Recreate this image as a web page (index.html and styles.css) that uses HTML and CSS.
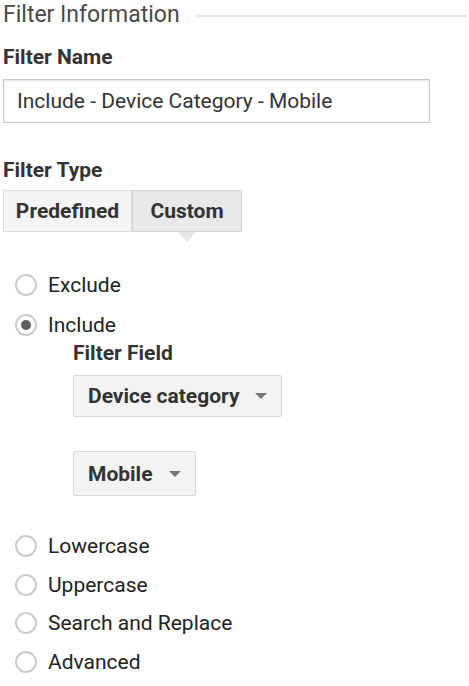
FILE: index.html
```html
<!DOCTYPE html>
<html lang="en">

<head>
    <meta charset="UTF-8">
    <meta name="viewport" content="width=device-width, initial-scale=1.0">
    <title>Filter Information</title>
    <link rel="stylesheet" href="styles.css">
</head>

<body>
    <div class="panel">
        <div class="sectionHead">
            <span>Filter Information</span>
            <div class="sectionLine"></div>
        </div>

        <div class="label">Filter Name</div>
        <input class="nameInput" type="text" value="Include - Device Category - Mobile">

        <div class="label typeLabel">Filter Type</div>
        <div class="tabs">
            <div class="tab">Predefined</div>
            <div class="tab active">Custom</div>
        </div>

        <div class="options">
            <div class="option first"><span class="radio"></span>Exclude</div>
            <div class="option first"><span class="radio checked"></span>Include</div>
            <div class="fieldBox">
                <div class="label">Filter Field</div>
                <div class="dropdown wide">Device category<span class="caret"></span></div>
                <div class="dropdown">Mobile<span class="caret"></span></div>
            </div>
            <div class="option"><span class="radio"></span>Lowercase</div>
            <div class="option"><span class="radio"></span>Uppercase</div>
            <div class="option"><span class="radio"></span>Search and Replace</div>
            <div class="option"><span class="radio"></span>Advanced</div>
        </div>
    </div>
</body>

</html>
```

FILE: styles.css
```css
body {
    margin: 0;
    background-color: #ffffff;
    font-family: Roboto, "Liberation Sans", sans-serif;
    color: #222222;
}

.panel {
    padding: 0 3px;
}

.sectionHead {
    display: flex;
    align-items: center;
    height: 28px;
    font-size: 23px;
    color: #4a4a4a;
}

.sectionLine {
    flex: 1;
    height: 2px;
    margin-left: 15px;
    margin-top: 3px;
    background-color: #e2e2e2;
}

.label {
    font-size: 21px;
    font-weight: bold;
    color: #333333;
    line-height: 24px;
}

.panel > .label {
    margin-top: 17px;
}

.panel > .typeLabel {
    margin-top: 35px;
}

.nameInput {
    display: block;
    box-sizing: border-box;
    width: 427px;
    height: 44px;
    margin: 10px 0 0;
    padding: 0 13px;
    border: 1px solid #c8c8c8;
    box-shadow: inset 0 1px 2px rgba(0, 0, 0, 0.12);
    font-family: Roboto, "Liberation Sans", sans-serif;
    font-size: 21px;
    color: #333333;
    outline: none;
}

.tabs {
    display: flex;
    margin-top: 8px;
}

.tab {
    box-sizing: border-box;
    width: 129px;
    height: 42px;
    line-height: 40px;
    text-align: center;
    border: 1px solid #dddddd;
    background-color: #f5f5f5;
    font-size: 21px;
    font-weight: bold;
    color: #333333;
}

.tab.active {
    position: relative;
    width: 110px;
    border-color: #d4d4d4;
    background-color: #e9e9e9;
}

.tab.active::after {
    content: "";
    position: absolute;
    left: 50%;
    bottom: -11px;
    margin-left: -9px;
    border-left: 9px solid transparent;
    border-right: 9px solid transparent;
    border-top: 10px solid #e6e6e6;
}

.options {
    margin-top: 33px;
    padding-left: 12px;
}

.option {
    display: flex;
    align-items: center;
    height: 38.5px;
    font-size: 21px;
    color: #222222;
}

.option.first {
    height: 40px;
}

.radio {
    box-sizing: border-box;
    width: 22px;
    height: 22px;
    margin-right: 11px;
    border: 2px solid #cccccc;
    border-radius: 50%;
    display: flex;
    justify-content: center;
    align-items: center;
}

.radio.checked::after {
    content: "";
    width: 10px;
    height: 10px;
    border-radius: 50%;
    background-color: #5e5e5e;
}

.fieldBox {
    margin-top: -4px;
    padding: 0 0 31px 58px;
}

.dropdown {
    display: flex;
    align-items: center;
    box-sizing: border-box;
    width: 123px;
    height: 45px;
    margin-top: 34px;
    padding: 0 14px;
    border: 1px solid #dadada;
    border-radius: 2px;
    background-color: #f3f3f3;
    font-size: 21px;
    font-weight: bold;
    color: #333333;
}

.dropdown.wide {
    width: 209px;
    height: 42px;
    margin-top: 10px;
}

.caret {
    margin-left: auto;
    border-left: 6px solid transparent;
    border-right: 6px solid transparent;
    border-top: 6px solid #777777;
}
```
